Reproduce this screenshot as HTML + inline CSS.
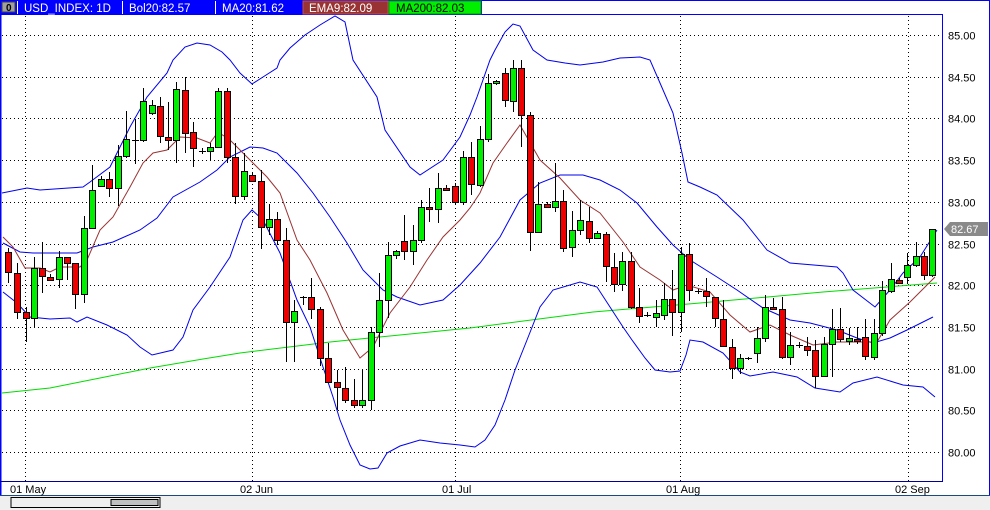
<!DOCTYPE html>
<html><head><meta charset="utf-8"><style>
body{margin:0;width:990px;height:510px;overflow:hidden;background:#fff;font-family:"Liberation Sans",sans-serif}
svg{display:block}
</style></head><body>
<svg id="s" width="990" height="510" xmlns="http://www.w3.org/2000/svg" font-family="Liberation Sans, sans-serif">
<rect x="0" y="0" width="990" height="510" fill="#fff"/>
<rect x="0" y="495" width="990" height="15" fill="#efefef"/>
<line x1="0" y1="495.5" x2="990" y2="495.5" stroke="#1a4a80"/>
<rect x="11" y="497.5" width="149" height="10" fill="#efefef" stroke="#000"/>
<rect x="111" y="499.5" width="47" height="6" fill="#c0c0c0" stroke="#000"/>
<line x1="0.5" y1="0" x2="0.5" y2="495" stroke="#00f" stroke-width="2"/>
<line x1="0" y1="0.5" x2="990" y2="0.5" stroke="#00f"/>
<line x1="989.5" y1="0" x2="989.5" y2="495" stroke="#00f"/>
<line x1="0" y1="14.5" x2="943" y2="14.5" stroke="#00f"/>
<line x1="942.5" y1="14" x2="942.5" y2="482" stroke="#00f"/>
<line x1="0" y1="481.5" x2="943" y2="481.5" stroke="#000099"/>
<rect x="0" y="0" width="482" height="14" fill="#00f"/>
<rect x="2" y="2" width="13" height="10" fill="#a0a0a0" stroke="#404040" stroke-width="1"/>
<text x="6" y="11" font-size="10" font-weight="bold" fill="#000">0</text>
<g stroke="#fff"><line x1="17.5" y1="1" x2="17.5" y2="14"/><line x1="122.5" y1="1" x2="122.5" y2="14"/><line x1="215.5" y1="1" x2="215.5" y2="14"/></g>
<rect x="303" y="1" width="85" height="13" fill="#993333" stroke="#c05050"/>
<rect x="389" y="1" width="92" height="13" fill="#00ee00" stroke="#009900"/>
<g font-size="11.5" fill="#fff">
<text x="24" y="12">USD_INDEX: 1D</text>
<text x="129" y="12">Bol20:82.57</text>
<text x="222" y="12">MA20:81.62</text>
<text x="309" y="12">EMA9:82.09</text>
<text x="396" y="12" fill="#000">MA200:82.03</text>
</g>
<g id="grid" stroke="#000" stroke-dasharray="1,3"></g>
<g font-size="11" fill="#000" id="lbl"></g>
<g font-size="11" fill="#000">
<text x="10" y="493">01 May</text>
<text x="240" y="493">02 Jun</text>
<text x="442" y="493">01 Jul</text>
<text x="666" y="493">01 Aug</text>
<text x="895" y="493">02 Sep</text>
</g>
<polygon points="944,229 950,222 988,222 988,236 950,236" fill="#8a8a8a"/>
<text x="951" y="233" font-size="11" fill="#fff">82.67</text>
<g fill="none" stroke-width="1">
<polyline stroke="#00dd00" points="2,393 50,388 100,378 150,368 203,359 240,353 330,342 470,328 593,312 700,303 823,292 937,283"/>
<polyline stroke="#0000ee" points="2,193 27,188 40,190 83,187 90,182 110,167 130,127 147,97 167,73 173,60 185,47 197,43 210,45 222,52 230,60 240,73 252,84 263,77 277,68 280,60 290,48 305,35 320,25 335,16 345,22 353,60 377,97 385,130 410,167 420,175 443,160 460,137 470,115 477,97 490,60 495,50 505,32 513,24 520,26 533,50 547,60 565,63 580,65 603,62 620,58 640,57 650,60 660,83 673,113 682,153 688,182 700,187 717,195 743,220 767,250 790,263 837,267 843,273 853,290 875,307 890,290 903,273 920,257 937,230"/>
<polyline stroke="#0000ee" points="3,243 20,252 33,253 50,253 77,253 93,247 113,242 140,230 157,218 173,197 200,182 217,170 230,157 250,147 263,148 277,153 297,173 313,193 330,217 347,243 363,270 383,290 397,297 420,305 443,300 460,285 480,263 500,237 520,200 540,183 560,175 583,175 600,180 620,190 637,203 657,227 673,245 690,260 717,277 737,290 763,308 790,320 810,323 837,330 857,338 873,343 890,338 907,330 933,317"/>
<polyline stroke="#0000ee" points="3,292 17,303 30,317 50,319 70,318 77,322 87,317 107,325 127,335 140,347 152,355 173,350 183,337 193,310 210,287 230,257 243,220 252,210 263,220 280,253 297,300 310,327 323,367 333,397 340,420 350,445 360,465 370,469 378,468 387,453 400,446 420,440 440,443 460,445 475,447 485,440 495,425 505,400 515,370 527,340 540,307 553,290 580,282 597,287 610,307 623,327 632,340 645,358 655,370 670,372 680,371 686,355 690,340 703,342 723,353 740,372 750,376 773,372 797,377 815,388 840,392 853,383 877,377 903,385 923,387 935,397"/>
<polyline stroke="#993333" points="3,237 13,247 25,268 40,268 50,272 60,267 80,267 87,260 100,230 113,217 130,187 143,163 153,153 167,150 180,137 197,138 210,143 218,132 230,140 240,150 250,160 267,177 280,193 297,240 310,260 327,293 343,330 360,358 373,347 390,313 410,287 427,260 443,237 460,220 470,208 480,193 493,163 507,143 520,125 540,160 560,178 580,200 600,213 623,242 640,267 660,280 673,290 687,285 710,292 730,315 750,332 770,325 790,335 813,345 837,342 877,342 890,320 910,302 927,285 935,277"/>
</g>
<g id="c"></g>
</svg>
<script>
var NS="http://www.w3.org/2000/svg";
function el(t,a,p){var e=document.createElementNS(NS,t);for(var k in a)e.setAttribute(k,a[k]);p.appendChild(e);return e;}
var g=document.getElementById('grid'),lb=document.getElementById('lbl');
var labs=["85.00","84.50","84.00","83.50","83.00","82.50","82.00","81.50","81.00","80.50","80.00"];
for(var k=0;k<11;k++){var y=Math.round(35+41.7*k)+0.5;el('line',{x1:2,y1:y,x2:941,y2:y},g);var t=el('text',{x:948,y:y+4},lb);t.textContent=labs[k];}
[25,252,455,680,908].forEach(function(x){el('line',{x1:x+0.5,y1:16,x2:x+0.5,y2:481},g);});
var d=[[8,252,272,248,283,'r'],[17,273,312,263,319,'r'],[26,312,318,307,342,'r'],[34,268,318,257,327,'g'],[42,268,276,242,293,'r'],[50,277,280,274,281,'r'],[59,257,279,251,288,'g'],[67,257,263,257,280,'r'],[75,263,294,263,309,'r'],[84,228,294,216,303,'g'],[92,190,228,165,228,'g'],[101,179,186,176,187,'g'],[109,179,188,172,197,'r'],[118,156,188,145,206,'g'],[126,139,156,111,158,'g'],[135,140,140,119,164,'d'],[143,101,140,88,142,'g'],[152,105,113,100,115,'g'],[160,106,136,97,143,'r'],[168,137,140,102,150,'r'],[176,89,140,82,163,'g'],[185,90,133,77,153,'r'],[193,132,148,122,167,'r'],[202,151,151,148,154,'d'],[210,147,151,143,160,'g'],[218,91,147,88,148,'g'],[227,91,157,88,163,'r'],[235,157,196,143,204,'r'],
[244,171,196,153,200,'g'],[252,175,181,173,182,'r'],[261,181,227,170,249,'r'],[269,219,227,204,235,'g'],[277,219,240,212,245,'r'],[286,240,322,228,362,'r'],[294,311,322,300,362,'g'],[303,297,297,296,305,'d'],[311,297,309,278,319,'r'],[320,309,358,307,366,'r'],[328,358,382,343,383,'r'],[337,382,387,370,410,'r'],[345,388,400,367,403,'r'],[354,400,405,379,408,'r'],[362,400,405,369,408,'g'],[371,332,400,327,410,'g'],[379,300,332,273,347,'g'],[388,255,300,242,318,'g'],[396,251,255,250,259,'g'],[404,241,251,215,260,'r'],[413,240,251,225,265,'g'],[421,207,240,200,243,'g'],[429,207,209,188,222,'r'],[438,188,209,173,223,'g'],[446,188,190,185,191,'r'],[455,186,202,183,205,'r'],[463,157,202,151,205,'g'],
[471,157,184,142,195,'r'],[480,139,185,126,187,'g'],[488,83,139,74,142,'g'],[496,81,83,80,85,'g'],[505,73,100,68,107,'r'],[513,68,101,60,112,'g'],[521,68,115,60,147,'r'],[530,115,232,112,251,'r'],[538,204,232,182,233,'g'],[547,204,207,202,208,'r'],[555,201,207,163,212,'g'],[563,201,248,190,252,'r'],[572,230,247,211,257,'g'],[580,220,230,200,235,'g'],[589,221,238,207,243,'r'],[597,233,238,231,239,'g'],[606,234,266,232,282,'r'],[614,267,284,253,292,'r'],[622,261,284,252,291,'g'],[631,261,307,252,309,'r'],[639,307,316,288,323,'r'],[647,315,315,312,317,'d'],[656,313,317,300,327,'g'],[664,299,315,283,320,'g'],[672,299,312,270,336,'r'],[681,254,312,247,332,'g'],[689,254,290,243,301,'r'],
[698,291,291,289,294,'d'],[706,291,296,278,307,'r'],[715,297,318,297,327,'r'],[723,319,346,300,347,'r'],[732,347,368,339,379,'r'],[740,358,368,354,374,'g'],[748,358,358,357,360,'d'],[757,338,353,327,363,'g'],[765,307,338,295,342,'g'],[773,307,309,298,310,'r'],[782,309,357,297,359,'r'],[790,345,357,332,365,'g'],[799,345,345,342,348,'d'],[807,346,350,337,356,'r'],[815,350,376,340,388,'r'],[824,344,376,337,377,'g'],[832,329,344,309,377,'g'],[840,329,339,308,342,'r'],[849,338,341,328,345,'g'],[857,339,341,327,344,'r'],[865,337,356,319,360,'r'],[874,333,357,319,360,'g'],[882,290,333,281,336,'g'],[891,279,291,263,293,'g'],[899,280,283,278,284,'r'],[907,265,277,253,284,'g'],[916,256,265,242,267,'g'],[924,256,275,252,280,'r'],[932,229,275,229,277,'g']];
var c=document.getElementById('c');
d.forEach(function(a){var x=a[0];
el('line',{x1:x+0.5,y1:a[3],x2:x+0.5,y2:a[4],stroke:'#000','stroke-width':1},c);
if(a[5]=='d'){el('line',{x1:x-3,y1:a[1]+0.5,x2:x+4,y2:a[1]+0.5,stroke:'#000','stroke-width':1},c);}
else{var h=Math.max(a[2]-a[1],2);el('rect',{x:x-2.5,y:a[1]+0.5,width:6,height:h,fill:a[5]=='g'?'#00ee00':'#ee0000',stroke:'#000','stroke-width':1},c);}
});
</script>
</body></html>
